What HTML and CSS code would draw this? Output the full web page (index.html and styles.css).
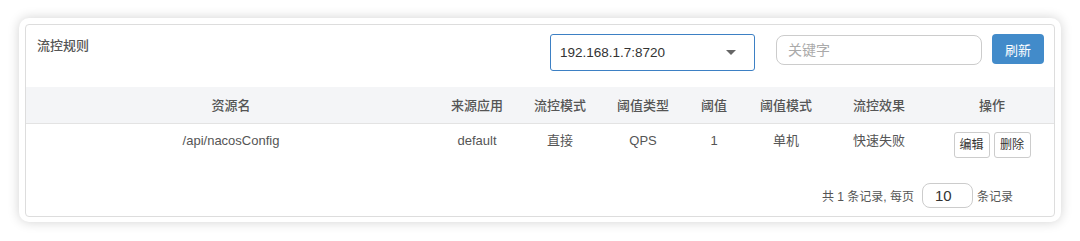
FILE: index.html
```html
<!DOCTYPE html>
<html lang="zh-CN">
<head>
  <meta charset="UTF-8" />
  <meta name="viewport" content="width=device-width, initial-scale=1.0" />
  <title>流控规则</title>
  <link rel="stylesheet" href="styles.css">
</head>
<body>
  <div class="card">
    <div class="panel">
      <!-- 顶部: 标题和筛选 -->
      <div class="panel-head">
        <div class="title">流控规则</div>
        <div class="select">
          <span>192.168.1.7:8720</span>
          <i class="caret"></i>
        </div>
        <input class="search" type="text" placeholder="关键字" />
        <button class="btn-primary">刷新</button>
      </div>

      <!-- 规则列表 -->
      <table class="rules">
        <colgroup>
          <col style="width:410px"><col style="width:82px"><col style="width:84px"><col style="width:82px">
          <col style="width:60px"><col style="width:84px"><col style="width:102px"><col style="width:124px">
        </colgroup>
        <thead>
          <tr>
            <th>资源名</th>
            <th>来源应用</th>
            <th>流控模式</th>
            <th>阈值类型</th>
            <th>阈值</th>
            <th>阈值模式</th>
            <th>流控效果</th>
            <th>操作</th>
          </tr>
        </thead>
        <tbody>
          <tr>
            <td>/api/nacosConfig</td>
            <td>default</td>
            <td>直接</td>
            <td>QPS</td>
            <td>1</td>
            <td>单机</td>
            <td>快速失败</td>
            <td class="ops">
              <button class="btn-xs">编辑</button><button class="btn-xs">删除</button>
            </td>
          </tr>
        </tbody>
      </table>

      <!-- 分页 -->
      <div class="pager">
        <span>共 1 条记录, 每页</span>
        <input class="page-size" type="text" value="10" />
        <span>条记录</span>
      </div>
    </div>
  </div>
</body>
</html>
```

FILE: styles.css
```css
* { box-sizing: border-box; }
body { margin: 0; background: #fff; font-family: "Liberation Sans", "Noto Sans CJK SC", sans-serif; font-size: 13px; color: #555; }
.card { margin: 18px 19px; height: 204px; padding: 6px 6px 5px; background: #fff; border-radius: 10px; box-shadow: 0 0 12px rgba(0,0,0,0.18); }
.panel { border: 1px solid #ddd; border-radius: 4px; height: 193px; }

.panel-head { display: flex; align-items: flex-start; height: 62px; padding: 9px 10px 0 11px; }
.title { margin-top: 3px; line-height: 18px; font-weight: 500; color: #555; }
.select { margin-left: auto; position: relative; width: 205px; height: 37px; border: 1px solid #3d80c4; border-radius: 3px; padding-left: 9px; line-height: 35px; font-size: 13.5px; color: #333; }
.caret { position: absolute; right: 18px; top: 15px; width: 0; height: 0; border-left: 5px solid transparent; border-right: 5px solid transparent; border-top: 5px solid #666; }
.search { margin: 1px 0 0 21px; width: 206px; height: 30px; border: 1px solid #ccc; border-radius: 8px; padding: 0 11px; font: inherit; font-size: 14px; outline: none; }
.search::placeholder { color: #aaa; }
.btn-primary { margin-left: 10px; width: 52px; height: 30px; border: none; border-radius: 4px; background: #428bca; color: #fff; font: inherit; font-size: 13px; }

.rules { width: 100%; table-layout: fixed; border-collapse: collapse; }
.rules th { height: 36px; background: #f4f5f7; border-bottom: 1px solid #e3e3e3; font-weight: 500; color: #555; text-align: center; padding: 0; }
.rules td { padding: 8px 0; line-height: 18px; text-align: center; vertical-align: top; color: #555; }
.ops { font-size: 0; }
.btn-xs { width: 36px; height: 26px; margin: 0 2px; padding: 0; border: 1px solid #ccc; border-radius: 3px; background: #fff; color: #333; font: inherit; font-size: 12px; }
.btn-xs + .btn-xs { width: 37px; }

.pager { display: flex; justify-content: flex-end; align-items: center; margin-top: 17px; padding-right: 41px; font-size: 12px; color: #555; }
.page-size { margin: 0 4px 0 8px; width: 51px; height: 25px; border: 1px solid #ccc; border-radius: 8px; padding: 0 12px; font: inherit; font-size: 15px; color: #333; outline: none; }
```
